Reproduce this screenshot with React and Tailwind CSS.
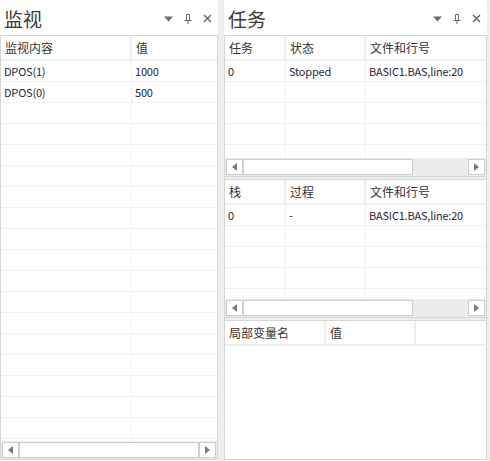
import React from 'react'

const font = { fontFamily: '"Noto Sans CJK SC", "Noto Sans", sans-serif' }

function PanelTitle({ title }) {
    return (
        <div className="h-[35px] flex items-center justify-between pl-[4px] pr-[6px] bg-white">
            <span className="text-[19px] leading-none text-[#3a3a3a] mt-[2px]">{title}</span>
            <div className="flex items-center gap-[11px] mt-[2px]">
                <svg width="9" height="6" viewBox="0 0 9 6"><path d="M0 0.5 H9 L4.5 5.5 Z" fill="#6b6b6b" /></svg>
                <svg width="8" height="10" viewBox="0 0 8 10" fill="none" stroke="#6b6b6b">
                    <path d="M2.5 0.5 V6.5 M5.5 0.5 V6.5 M2.5 0.5 H5.5 M0.5 6.5 H7.5 M4 6.5 V10" />
                </svg>
                <svg width="9" height="9" viewBox="0 0 9 9" stroke="#6b6b6b" strokeWidth="1.5">
                    <path d="M1 1 L8 8 M8 1 L1 8" />
                </svg>
            </div>
        </div>
    )
}

function Arrow({ dir }) {
    return (
        <div className="w-[17px] h-full border border-[#cdcdcd] bg-white flex items-center justify-center">
            {dir === 'left' ? (
                <svg width="5" height="8" viewBox="0 0 5 8"><path d="M5 0 V8 L0 4 Z" fill="#7a7a7a" /></svg>
            ) : (
                <svg width="5" height="8" viewBox="0 0 5 8"><path d="M0 0 V8 L5 4 Z" fill="#7a7a7a" /></svg>
            )}
        </div>
    )
}

function ScrollBar({ thumb }) {
    return (
        <div className="h-[18px] flex items-stretch px-[1px] py-[1px] bg-[#ececec]">
            <Arrow dir="left" />
            <div className="flex-1 flex">
                <div className="h-full border border-[#cdcdcd] bg-white" style={{ width: thumb }} />
            </div>
            <Arrow dir="right" />
        </div>
    )
}

function Grid({ cols, headers, rows, rowCount }) {
    const filled = [...rows]
    while (filled.length < rowCount) filled.push(cols.map(() => ''))
    return (
        <div className="flex flex-col">
            <div className="flex h-[25px] border-b-2 border-[#eeeeee]">
                {headers.map((h, i) => (
                    <div
                        key={i}
                        className={`flex items-center pl-[4px] text-[12px] text-[#333] ${i < headers.length - 1 ? 'border-r-2 border-[#eeeeee]' : ''}`}
                        style={{ width: cols[i] }}
                    >
                        {h}
                    </div>
                ))}
            </div>
            {filled.map((r, ri) => (
                <div key={ri} className="flex h-[21px] border-b border-[#f1f1f1]">
                    {r.map((c, ci) => (
                        <div
                            key={ci}
                            className={`flex items-center pl-[3px] text-[11px] tracking-[-0.2px] text-[#1f1f3a] ${ci < r.length - 1 ? 'border-r border-[#f1f1f1]' : ''}`}
                            style={{ width: cols[ci] }}
                        >
                            {c}
                        </div>
                    ))}
                </div>
            ))}
        </div>
    )
}

export default function App() {
    return (
        <div className="w-[490px] h-[461px] flex bg-white overflow-hidden" style={font}>
            {/* left dock: 监视 */}
            <div className="w-[218px] flex flex-col">
                <PanelTitle title="监视" />
                <div className="h-[425px] border border-[#d6d6d6] flex flex-col justify-between overflow-hidden">
                    <div className="overflow-hidden h-[405px]">
                        <Grid
                            cols={[131, 85]}
                            headers={['监视内容', '值']}
                            rows={[['DPOS(1)', '1000'], ['DPOS(0)', '500']]}
                            rowCount={19}
                        />
                    </div>
                    <ScrollBar thumb="100%" />
                </div>
            </div>

            <div className="w-[6px] bg-[#eeeeee]" />

            {/* right dock: 任务 */}
            <div className="w-[263px] flex flex-col">
                <PanelTitle title="任务" />
                <div className="h-[425px] border border-[#d6d6d6] flex flex-col overflow-hidden">
                    <div className="h-[140px] flex flex-col justify-between overflow-hidden">
                        <div className="h-[121px] overflow-hidden">
                            <Grid
                                cols={[61, 80, 120]}
                                headers={['任务', '状态', '文件和行号']}
                                rows={[['0', 'Stopped', 'BASIC1.BAS,line:20']]}
                                rowCount={5}
                            />
                        </div>
                        <ScrollBar thumb="170px" />
                    </div>
                    <div className="h-[4px] border-y border-[#d6d6d6] bg-[#eeeeee]" />
                    <div className="h-[137px] flex flex-col justify-between overflow-hidden">
                        <div className="h-[118px] overflow-hidden">
                            <Grid
                                cols={[61, 80, 120]}
                                headers={['栈', '过程', '文件和行号']}
                                rows={[['0', '-', 'BASIC1.BAS,line:20']]}
                                rowCount={5}
                            />
                        </div>
                        <ScrollBar thumb="170px" />
                    </div>
                    <div className="h-[4px] border-y border-[#d6d6d6] bg-[#eeeeee]" />
                    <div className="flex-1">
                        <Grid
                            cols={[101, 90, 70]}
                            headers={['局部变量名', '值', '']}
                            rows={[]}
                            rowCount={0}
                        />
                    </div>
                </div>
            </div>

            <div className="flex-1 bg-[#eeeeee]" />
        </div>
    )
}
